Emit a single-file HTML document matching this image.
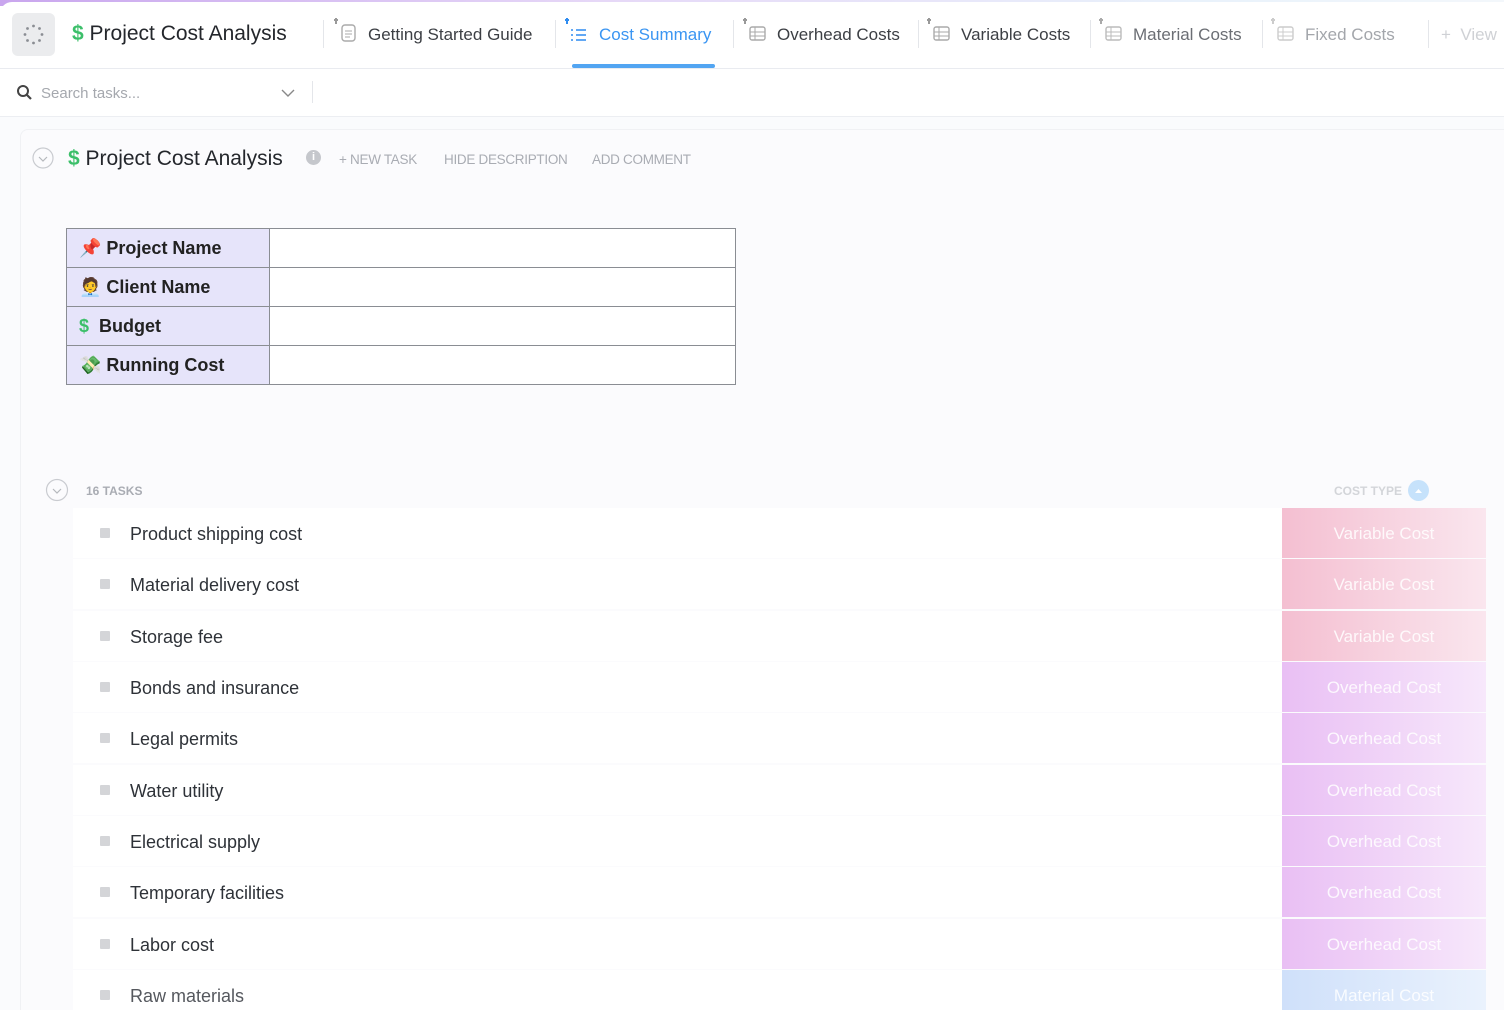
<!DOCTYPE html>
<html><head><meta charset="utf-8"><style>
*{box-sizing:border-box;margin:0;padding:0}
html,body{width:1504px;height:1010px;overflow:hidden}
body{background:#fff;font-family:"Liberation Sans",sans-serif;color:#2a2e34;position:relative}
.topstrip{position:absolute;left:0;top:0;width:1504px;height:6px;background:linear-gradient(90deg,#c9a6ee,#e6d8f7 40%,#e9f2fb 80%,#f3f7fb)}
.top{position:absolute;left:0;top:2px;width:1504px;height:67px;background:#fff;border-radius:12px 0 0 0;border-bottom:1px solid #e9ebf0}
.logo{position:absolute;left:12px;top:11px;width:43px;height:43px;background:#ebecee;border-radius:6px}
.t{position:absolute;top:23px;font-size:17px;color:#3c3f44;white-space:nowrap}
.sep{position:absolute;top:18px;width:1px;height:28px;background:#e4e6ea}
.ic{position:absolute;top:22px}
.search{position:absolute;left:0;top:69px;width:1504px;height:48px;background:#fff;border-bottom:1px solid #eceef2}
.main{position:absolute;left:0;top:117px;width:1504px;height:893px;background:#fafbfd;overflow:hidden}
.panel{position:absolute;left:20px;top:12px;width:1484px;height:881px;background:#fbfbfd;border-left:1px solid #f0f1f4;border-top:1px solid #f0f1f4;border-radius:8px 0 0 0}
table{position:absolute;left:66px;top:228px;border-collapse:collapse}
td{border:1.5px solid #8a8d93;height:39px;font-size:18px;font-weight:bold;color:#222}
td.h{width:203px;background:#e6e4fa;padding-left:12px}
td.v{width:466px;background:#fff}
.row{position:absolute;left:73px;width:1209px;height:50px;background:#fff;font-size:18px;color:#2e3238}
.row .sq{position:absolute;left:27px;top:20px;width:10px;height:10px;background:#d4d5d8;border-radius:1px}
.row span{position:absolute;left:57px;top:16px}
.tag{position:absolute;left:1282px;width:204px;height:50px;color:rgba(255,255,255,.85);font-size:17px;text-align:center;line-height:52px}
.var{background:linear-gradient(90deg,#f4bfd1,#fae6ee)}
.ovh{background:linear-gradient(90deg,#e9bff4,#f7e8fb)}
.mat{background:linear-gradient(90deg,#cfe0fa,#eaf2fd)}
.gray{color:#a9acb3;font-size:13.5px;position:absolute;letter-spacing:-0.3px}
</style></head><body>
<div class="topstrip"></div>
<div class="top">
 <div class="logo"><svg width="43" height="43" viewBox="0 0 43 43"><g fill="#8a8d93"><circle cx="21.5" cy="13" r="1.4"/><circle cx="27.5" cy="15.5" r="1.4"/><circle cx="30" cy="21.5" r="1.4"/><circle cx="27.5" cy="27.5" r="1.4"/><circle cx="21.5" cy="30" r="1.4"/><circle cx="15.5" cy="27.5" r="1.4"/><circle cx="13" cy="21.5" r="1.4"/><circle cx="15.5" cy="15.5" r="1.4"/></g></svg></div>
 <div class="t" style="left:72px;top:20px;font-size:21px;color:#24272c"><span style="color:#3cbf6a;font-weight:bold">$</span>&nbsp;Project Cost Analysis</div>
 <div class="sep" style="left:323px"></div>
 <svg class="ic" style="left:333px;top:14px" width="26" height="28"><path d="M3 2v6M1 4h4" stroke="#999" stroke-width="2"/><rect x="9" y="9" width="13" height="16" rx="3" fill="none" stroke="#aaa" stroke-width="1.4"/><path d="M12 15h7M12 18h7M12 21h5" stroke="#aaa"/></svg>
 <div class="t" style="left:368px">Getting Started Guide</div>
 <div class="sep" style="left:555px"></div>
 <svg class="ic" style="left:564px;top:14px" width="26" height="28"><path d="M3 2v6M1 4h4" stroke="#2f8cf0" stroke-width="2"/><g stroke="#2f8cf0" stroke-width="1.6"><path d="M12 14h10M12 19h10M12 24h10"/><path d="M7 14h2M7 19h2M7 24h2"/></g></svg>
 <div class="t" style="left:599px;color:#3a95f2">Cost Summary</div>
 <div style="position:absolute;left:572px;top:62px;width:143px;height:4px;background:#52a5f2;border-radius:2px"></div>
 <div class="sep" style="left:733px"></div>
 <svg class="ic" style="left:742px;top:14px" width="26" height="28"><path d="M3 2v6M1 4h4" stroke="#999" stroke-width="2"/><rect x="8" y="11" width="15" height="13" rx="2" fill="none" stroke="#aaa" stroke-width="1.4"/><path d="M8 16h15M8 20h15M13 11v13" stroke="#aaa"/></svg>
 <div class="t" style="left:777px">Overhead Costs</div>
 <div class="sep" style="left:918px"></div>
 <svg class="ic" style="left:926px;top:14px" width="26" height="28"><path d="M3 2v6M1 4h4" stroke="#999" stroke-width="2"/><rect x="8" y="11" width="15" height="13" rx="2" fill="none" stroke="#aaa" stroke-width="1.4"/><path d="M8 16h15M8 20h15M13 11v13" stroke="#aaa"/></svg>
 <div class="t" style="left:961px">Variable Costs</div>
 <div class="sep" style="left:1090px"></div>
 <svg class="ic" style="left:1098px;top:14px" width="26" height="28"><path d="M3 2v6M1 4h4" stroke="#aaa" stroke-width="2"/><rect x="8" y="11" width="15" height="13" rx="2" fill="none" stroke="#bbb" stroke-width="1.4"/><path d="M8 16h15M8 20h15M13 11v13" stroke="#bbb"/></svg>
 <div class="t" style="left:1133px;color:#6b6e74">Material Costs</div>
 <div class="sep" style="left:1262px"></div>
 <svg class="ic" style="left:1270px;top:14px" width="26" height="28"><path d="M3 2v6M1 4h4" stroke="#ccc" stroke-width="2"/><rect x="8" y="11" width="15" height="13" rx="2" fill="none" stroke="#ccc" stroke-width="1.4"/><path d="M8 16h15M8 20h15M13 11v13" stroke="#ccc"/></svg>
 <div class="t" style="left:1305px;color:#a3a6ab">Fixed Costs</div>
 <div class="sep" style="left:1428px"></div>
 <div class="t" style="left:1441px;color:#cfd1d5">+&nbsp; View</div>
</div>
<div class="search">
 <svg style="position:absolute;left:16px;top:15px" width="18" height="18"><circle cx="7" cy="7" r="5" fill="none" stroke="#444" stroke-width="2"/><path d="M11 11l4 4" stroke="#444" stroke-width="2.2"/></svg>
 <div style="position:absolute;left:41px;top:16px;font-size:15px;color:#a5a8ae">Search tasks...</div>
 <svg style="position:absolute;left:280px;top:18px" width="16" height="12"><path d="M2 3l6 6 6-6" fill="none" stroke="#888" stroke-width="1.4"/></svg>
 <div style="position:absolute;left:312px;top:12px;width:1px;height:22px;background:#e4e6ea"></div>
</div>
<div class="main">
 <div class="panel"></div>
 <svg style="position:absolute;left:32px;top:30px" width="22" height="22"><circle cx="11" cy="11" r="10" fill="none" stroke="#c9cbd0" stroke-width="1.2"/><path d="M7 10l4 4 4-4" fill="none" stroke="#b5b8bd" stroke-width="1.2"/></svg>
 <div style="position:absolute;left:68px;top:30px;font-size:21px;color:#24272c;white-space:nowrap"><span style="color:#3cbf6a;font-weight:bold">$</span>&nbsp;Project Cost Analysis</div>
 <div style="position:absolute;left:306px;top:33px;width:15px;height:15px;border-radius:50%;background:#c5c7cc;color:#fff;font-size:11px;text-align:center;line-height:15px;font-weight:bold">i</div>
 <div class="gray" style="left:339px;top:35px">+ NEW TASK</div>
 <div class="gray" style="left:444px;top:35px">HIDE DESCRIPTION</div>
 <div class="gray" style="left:592px;top:35px">ADD COMMENT</div>
 <svg style="position:absolute;left:45px;top:361px" width="24" height="24"><circle cx="12" cy="12" r="10.5" fill="none" stroke="#c9cbd0" stroke-width="1.2"/><path d="M8 11l4 4 4-4" fill="none" stroke="#b5b8bd" stroke-width="1.2"/></svg>
 <div style="position:absolute;left:86px;top:367px;font-size:12px;font-weight:bold;color:#a9acb3">16 TASKS</div>
 <div style="position:absolute;left:1334px;top:367px;font-size:12px;font-weight:bold;color:#d3d5d9">COST TYPE</div>
 <div style="position:absolute;left:1408px;top:363px;width:21px;height:21px;border-radius:50%;background:#c6e2fb"><svg width="21" height="21"><path d="M7 13l3.5-4 3.5 4z" fill="#fff"/></svg></div>
</div>
<table style="top:228px">
<tr><td class="h">📌 Project Name</td><td class="v"></td></tr>
<tr><td class="h">🧑‍💼 Client Name</td><td class="v"></td></tr>
<tr><td class="h"><span style="color:#3cbf6a">$</span>&nbsp; Budget</td><td class="v"></td></tr>
<tr><td class="h">💸 Running Cost</td><td class="v"></td></tr>
</table>
<div class="row" style="top:508px"><div class="sq"></div><span>Product shipping cost</span></div><div class="tag var" style="top:508px">Variable Cost</div>
<div class="row" style="top:559px"><div class="sq"></div><span>Material delivery cost</span></div><div class="tag var" style="top:559px">Variable Cost</div>
<div class="row" style="top:611px"><div class="sq"></div><span>Storage fee</span></div><div class="tag var" style="top:611px">Variable Cost</div>
<div class="row" style="top:662px"><div class="sq"></div><span>Bonds and insurance</span></div><div class="tag ovh" style="top:662px">Overhead Cost</div>
<div class="row" style="top:713px"><div class="sq"></div><span>Legal permits</span></div><div class="tag ovh" style="top:713px">Overhead Cost</div>
<div class="row" style="top:765px"><div class="sq"></div><span>Water utility</span></div><div class="tag ovh" style="top:765px">Overhead Cost</div>
<div class="row" style="top:816px"><div class="sq"></div><span>Electrical supply</span></div><div class="tag ovh" style="top:816px">Overhead Cost</div>
<div class="row" style="top:867px"><div class="sq"></div><span>Temporary facilities</span></div><div class="tag ovh" style="top:867px">Overhead Cost</div>
<div class="row" style="top:919px"><div class="sq"></div><span>Labor cost</span></div><div class="tag ovh" style="top:919px">Overhead Cost</div>
<div class="row" style="top:970px;height:40px"><div class="sq"></div><span style="color:#55585e">Raw materials</span></div><div class="tag mat" style="top:970px;height:40px">Material Cost</div>
</body></html>
